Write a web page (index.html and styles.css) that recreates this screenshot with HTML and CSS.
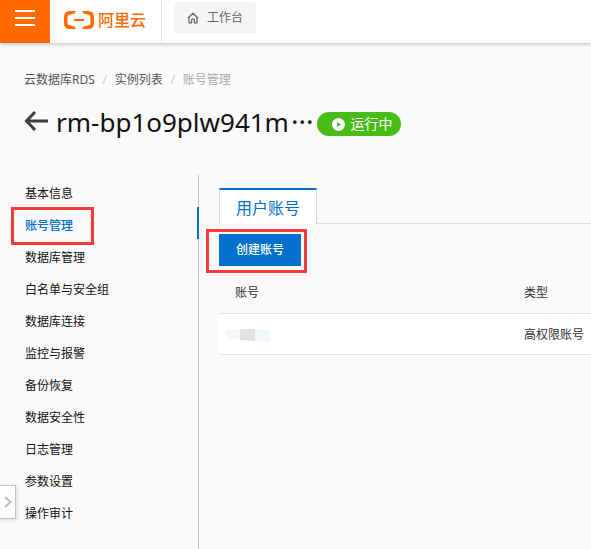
FILE: index.html
```html
<!DOCTYPE html>
<html lang="zh-CN">
<head>
<meta charset="utf-8">
<meta name="viewport" content="width=device-width, initial-scale=1">
<title>账号管理</title>
<link rel="stylesheet" href="styles.css">
</head>
<body>
<header class="topbar">
  <button class="menu-button" type="button" aria-label="菜单">
    <svg width="20" height="16" viewBox="0 0 20 16" fill="#fff"><path d="M0 0h20v2H0zM0 7h20v2H0zM0 14h20v2H0z"/></svg>
  </button>
  <a class="brand" href="#">
    <svg width="30" height="18" viewBox="0 0 30 18" fill="#ff6a00" aria-hidden="true">
      <path d="M12 0H6Q0 0 0 6v6q0 6 6 6h6l-1.500-2.500L6 14.500Q3.500 14 3.500 12V6Q3.500 4 6 3.500l4.500-1z"/>
      <path d="M18 0h6q6 0 6 6v6q0 6-6 6h-6l1.500-2.500 4.500-1q2.500-.5 2.500-2.500V6q0-2-2.500-2.500l-4.500-1z"/>
      <path d="M10 8h10v2H10z"/>
    </svg>
    <span>阿里云</span>
  </a>
  <a class="workbench" href="#">
    <svg width="12" height="12" viewBox="0 0 12 12" fill="none" stroke="#666" stroke-width="1.300" stroke-linejoin="round" aria-hidden="true">
      <path d="M.8 6.200 6 1.200l5.200 5M2 5.200v5.600h2.600V8.200Q4.600 6.800 6 6.800t1.400 1.400v2.600H10V5.200"/>
    </svg>
    <span>工作台</span>
  </a>
</header>

<nav class="breadcrumb" aria-label="路径">
  <a href="#">云数据库RDS</a><span class="slash">/</span><a href="#">实例列表</a><span class="slash">/</span><span class="current">账号管理</span>
</nav>

<div class="heading">
  <a class="back" href="#" aria-label="返回">
    <svg width="24" height="20" viewBox="0 0 24 20" fill="none" stroke="#3b3f44" stroke-width="3"><path d="M11 1 2.500 10 11 19M2 10h22"/></svg>
  </a>
  <h1>rm-bp1o9plw941m<span class="dots">···</span></h1>
  <span class="status">
    <svg width="13" height="13" viewBox="0 0 13 13" aria-hidden="true"><circle cx="6.500" cy="6.500" r="6.500" fill="#fff"/><path d="M5 4v5l4-2.500z" fill="#48bd17"/></svg>
    运行中
  </span>
</div>

<div class="layout">
  <nav class="sidebar" aria-label="实例菜单">
    <a href="#">基本信息</a>
    <a class="active" href="#" aria-current="page">账号管理</a>
    <a href="#">数据库管理</a>
    <a href="#">白名单与安全组</a>
    <a href="#">数据库连接</a>
    <a href="#">监控与报警</a>
    <a href="#">备份恢复</a>
    <a href="#">数据安全性</a>
    <a href="#">日志管理</a>
    <a href="#">参数设置</a>
    <a href="#">操作审计</a>
  </nav>
  <main class="content">
    <div class="tabs" role="tablist">
      <button class="tab" type="button" role="tab" aria-selected="true">用户账号</button>
    </div>
    <div class="toolbar">
      <button class="create" type="button">创建账号</button>
    </div>
    <table class="accounts">
      <thead><tr><th class="name-col" scope="col">账号</th><th scope="col">类型</th></tr></thead>
      <tbody><tr>
        <td class="masked"><svg width="54" height="16" viewBox="0 0 54 16" aria-label="已隐藏"><path d="M0 2h15v10H6L0 8z" fill="#f7f7f7"/><path d="M15 2h15v12l-15-1z" fill="#e4e3e1"/><path d="M30 2h15v14l-15-2z" fill="#f3f7fb"/></svg></td>
        <td>高权限账号</td>
      </tr></tbody>
    </table>
  </main>
</div>

<button class="drawer" type="button" aria-label="展开">
  <svg width="8" height="12" viewBox="0 0 8 12" fill="none" stroke="#b8bcc2" stroke-width="2"><path d="M1 1l5.500 5L1 11"/></svg>
</button>
</body>
</html>
```
FILE: styles.css
```css
*,
*::before { box-sizing: border-box; }

body {
  margin: 0;
  min-height: 100vh;
  display: flex;
  flex-direction: column;
  background: #fafafa;
  color: #111;
  font: 12px/20px "Noto Sans", "Noto Sans CJK SC", sans-serif;
}

a { color: inherit; text-decoration: none; }
button { border: 0; padding: 0; font: inherit; cursor: pointer; }
svg { display: block; flex: none; }

.topbar {
  display: flex;
  height: 43px;
  background: #fff;
  box-shadow: 0 1px 4px rgba(0, 0, 0, 0.25);
}

.menu-button {
  display: flex;
  justify-content: center;
  width: 50px;
  padding-top: 10px;
  background: #ff6a00;
}

.brand {
  display: flex;
  align-items: center;
  gap: 4px;
  width: 112px;
  padding: 0 0 4px 14px;
  border-right: 1px solid #e6e6e6;
  color: #ff6a00;
  font-size: 16px;
  font-weight: 500;
  white-space: nowrap;
}

.workbench {
  display: flex;
  align-items: center;
  gap: 8px;
  height: 32px;
  margin: 2px 0 0 12px;
  padding: 0 13px;
  border-radius: 2px;
  background: #f4f5f7;
  color: #666;
}

.breadcrumb {
  display: flex;
  padding: 27px 24px 0;
  color: #555;
}

.slash { width: 20px; text-align: center; color: #ccc; }
.current { color: #aaa; }

.heading {
  display: flex;
  align-items: center;
  height: 40px;
  margin: 11px 24px 0;
}

.back { margin-right: 8px; }

h1 {
  margin: 0;
  font-size: 26px;
  line-height: 40px;
  font-weight: 400;
  white-space: nowrap;
}

.dots { margin-left: 2px; font-size: 28px; }

.status {
  display: flex;
  align-items: center;
  gap: 5px;
  height: 24px;
  margin: 6px 0 0 4px;
  padding: 0 9px 0 15px;
  border-radius: 12px;
  background: #48bd17;
  color: #fff;
  font-size: 14px;
  white-space: nowrap;
}

.layout {
  display: flex;
  flex: 1;
  margin-top: 34px;
}

.sidebar {
  flex: none;
  width: 199px;
  border-right: 1px solid #bfc4cb;
}

.sidebar a {
  display: block;
  height: 32px;
  padding: 3px 0 0 25px;
  line-height: 32px;
}

.sidebar .active {
  position: relative;
  margin-right: -1px;
  border-right: 2px solid #0070cc;
  color: #0070cc;
  font-weight: 500;
}

.active::before {
  content: "";
  position: absolute;
  top: 0;
  left: 11px;
  width: 83px;
  height: 38px;
  border: 3px solid #ff3838;
}

.content {
  flex: 1;
  min-width: 0;
  padding: 13px 0 0 20px;
}

.tabs {
  display: flex;
  height: 36px;
  border-bottom: 1px solid #dedede;
}

.tab {
  height: 36px;
  padding: 2px 16px 0;
  border: 1px solid #dedede;
  border-top: 2px solid #0070cc;
  border-bottom: 0;
  background: #fff;
  color: #0070cc;
  font-size: 16px;
}

.toolbar { padding: 10px 0 6px; }

.create {
  display: block;
  position: relative;
  width: 82px;
  height: 32px;
  background: #0070cc;
  color: #fff;
  font-weight: 500;
}

.create::before {
  content: "";
  position: absolute;
  inset: -5px -6px -7px -13px;
  border: 3px solid #ff3838;
}

.accounts {
  width: 100%;
  border-collapse: collapse;
  table-layout: fixed;
  color: #333;
}

.accounts th,
.accounts td {
  height: 41px;
  padding: 2px 0 0 16px;
  border-bottom: 1px solid #e6e6e6;
  font-weight: 400;
  text-align: left;
  white-space: nowrap;
}

.accounts td { background: #fff; }
.accounts .name-col { width: 289px; }
.accounts .masked { padding-left: 6px; }

.drawer {
  position: fixed;
  bottom: 30px;
  left: 0;
  display: flex;
  align-items: center;
  width: 16px;
  height: 34px;
  padding-left: 4px;
  border: 1px solid #c0c4ca;
  border-left: 0;
  background: #fff;
  box-shadow: 1px 1px 4px rgba(0, 0, 0, 0.15);
}
```
